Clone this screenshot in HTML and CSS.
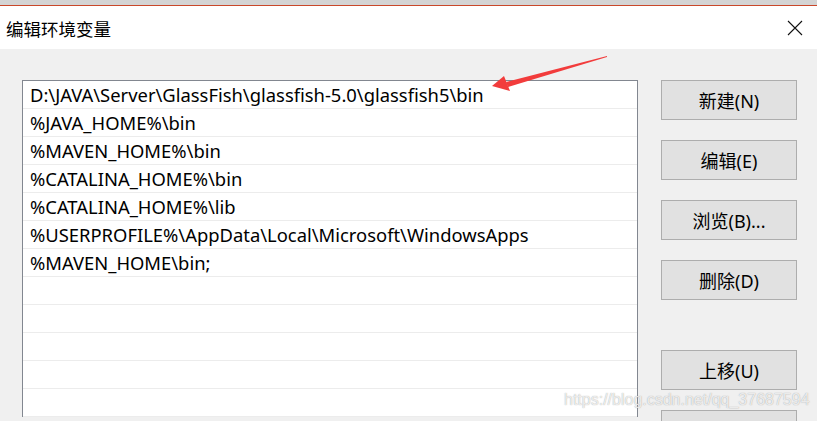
FILE: index.html
```html
<!DOCTYPE html>
<html lang="zh-CN">
<head>
<meta charset="utf-8">
<title>编辑环境变量</title>
<link rel="stylesheet" href="styles.css">
</head>
<body>
<div class="window">
  <div class="titlebar">
    <span class="title">编辑环境变量</span>
    <svg class="close" width="16" height="16" viewBox="0 0 16 16"><path d="M1 1 L15 15 M15 1 L1 15" stroke="#111" stroke-width="1.1" fill="none"/></svg>
  </div>
  <div class="content">
    <div class="list">
      <div class="row">D:\JAVA\Server\GlassFish\glassfish-5.0\glassfish5\bin</div>
      <div class="row">%JAVA_HOME%\bin</div>
      <div class="row">%MAVEN_HOME%\bin</div>
      <div class="row">%CATALINA_HOME%\bin</div>
      <div class="row">%CATALINA_HOME%\lib</div>
      <div class="row">%USERPROFILE%\AppData\Local\Microsoft\WindowsApps</div>
      <div class="row">%MAVEN_HOME\bin;</div>
      <div class="row"></div>
      <div class="row"></div>
      <div class="row"></div>
      <div class="row"></div>
      <div class="row"></div>
    </div>
    <div class="buttons">
      <button class="btn">新建(N)</button>
      <button class="btn">编辑(E)</button>
      <button class="btn">浏览(B)...</button>
      <button class="btn">删除(D)</button>
      <button class="btn btn-gap">上移(U)</button>
      <button class="btn" aria-label="下移(O)"></button>
    </div>
  </div>
  <svg class="arrow" width="130" height="45" viewBox="0 0 130 45">
    <path d="M127 1 L26 27 L28 32 L127 2 Z" fill="#f23c3c"/>
    <path d="M12 31 L24 21 L30 36 Z" fill="#f23c3c"/>
  </svg>
  <div class="watermark">https://blog.csdn.net/qq_37687594</div>
</div>
</body>
</html>
```
FILE: styles.css
```css
html, body {
  margin: 0;
  padding: 0;
  width: 817px;
  height: 421px;
  overflow: hidden;
  background: #f0f0f0;
}
.window {
  position: relative;
  width: 817px;
  height: 421px;
  overflow: hidden;
  font-family: "Noto Sans", "Noto Sans CJK SC", sans-serif;
}
.titlebar {
  height: 44px;
  background: #ffffff;
  border-top: 5px solid #d4d4d4;
  box-shadow: inset 0 1px 0 #c9472a;
  display: flex;
  align-items: center;
  justify-content: space-between;
  padding: 0 14px 0 6px;
}
.title {
  font-family: "Noto Sans CJK SC", sans-serif;
  font-size: 17.5px;
  color: #000;
  margin-top: 2px;
}
.close {
  width: 16px;
  height: 16px;
  margin-top: 1px;
}
.content {
  display: flex;
  align-items: flex-start;
  padding: 31px 0 0 22px;
  gap: 23px;
}
.list {
  width: 614px;
  border: 1px solid #828790;
  border-bottom: none;
  background: #ffffff;
}
.row {
  height: 27px;
  border-bottom: 1px solid #ececec;
  padding-left: 7px;
  font-size: 18.4px;
  line-height: 28px;
  color: #000;
  white-space: nowrap;
}
.buttons {
  display: flex;
  flex-direction: column;
  gap: 20px;
}
.btn {
  width: 136px;
  height: 40px;
  border: 1px solid #adadad;
  background: #e1e1e1;
  font-family: "Noto Sans", "Noto Sans CJK SC", sans-serif;
  font-size: 18px;
  color: #000;
  padding: 0;
}
.btn-gap {
  margin-top: 30px;
}
.arrow {
  position: absolute;
  left: 480px;
  top: 55px;
}
.watermark {
  position: absolute;
  left: 564px;
  top: 391px;
  font-family: "Liberation Sans", sans-serif;
  font-size: 16px;
  color: rgba(255,255,255,0.8);
  text-shadow: 0 0 1px rgba(110,110,110,0.7);
}
```
